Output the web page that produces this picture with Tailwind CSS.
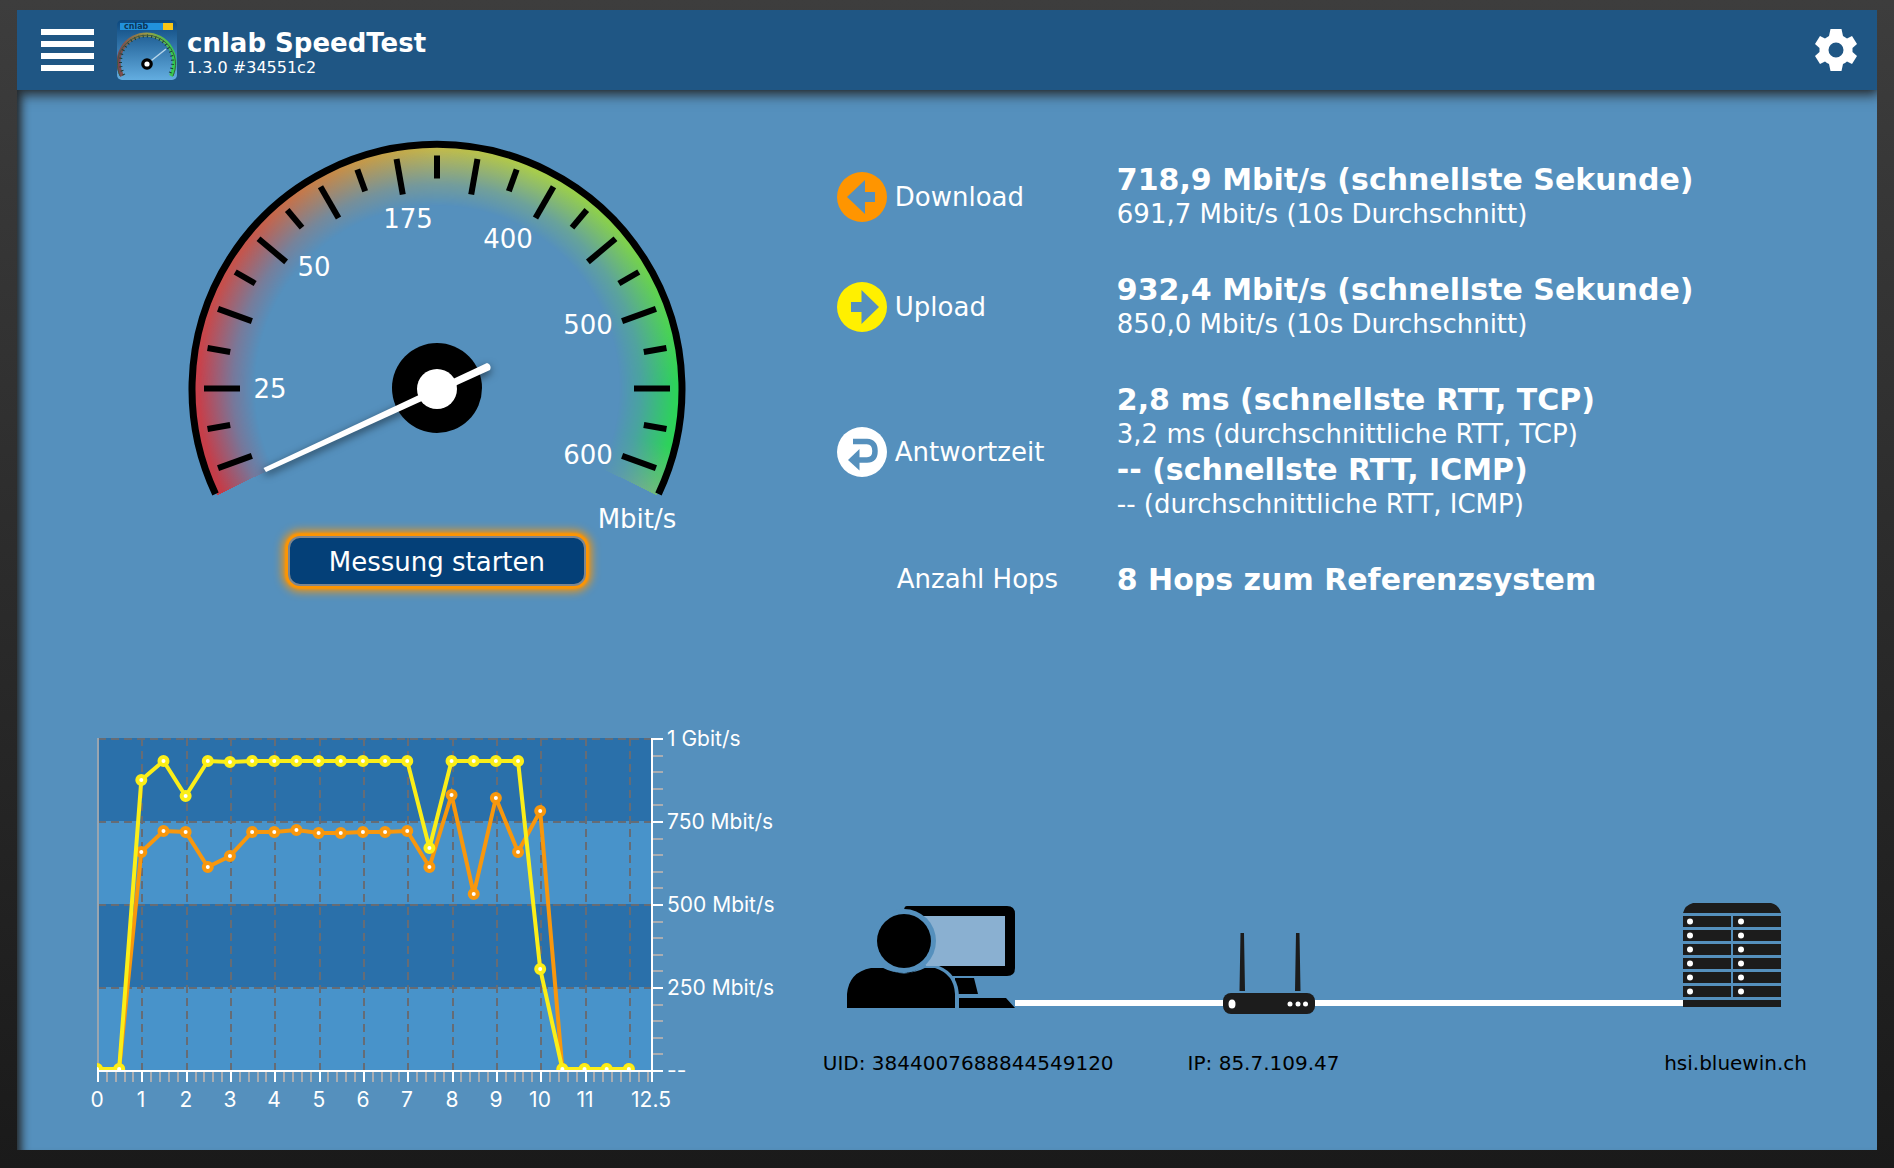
<!DOCTYPE html>
<html lang="de">
<head>
<meta charset="utf-8">
<title>cnlab SpeedTest</title>
<script src="https://cdn.jsdelivr.net/npm/@tailwindcss/browser@4"></script>
</head>
<body class="min-h-screen bg-linear-to-b from-[#3d3d3d] to-[#1a1a1a] px-[17px] pt-[10px] pb-[18px] font-['DejaVu_Sans',sans-serif] text-white">
<div class="flex min-h-[calc(100vh-28px)] flex-col overflow-hidden bg-[#5590bd]">
  <header class="relative z-10 flex h-20 shrink-0 items-center bg-[#1f5684] pr-5 pl-6 shadow-[0_2px_12px_2px_#222]">
    <button type="button" aria-label="Menü" class="flex w-[53px] flex-col gap-[6px]">
      <span class="h-[6px] w-full bg-white"></span>
      <span class="h-[6px] w-full bg-white"></span>
      <span class="h-[6px] w-full bg-white"></span>
      <span class="h-[6px] w-full bg-white"></span>
    </button>
    <svg class="ml-[23px] size-[60px]" viewBox="0 0 60 60" aria-hidden="true">
      <defs><linearGradient id="logo" x1="0" y1="0" x2="0" y2="1"><stop offset="0" stop-color="#0b477e"/><stop offset="1" stop-color="#63ade0"/></linearGradient>
      <linearGradient id="rim" x1="0" y1="0" x2="1" y2="0"><stop offset="0" stop-color="#7c4550"/><stop offset=".5" stop-color="#9c9a45"/><stop offset="1" stop-color="#2fcf50"/></linearGradient></defs>
      <rect width="60" height="60" rx="5" fill="url(#logo)"/>
      <rect x="3" y="3" width="43" height="7" fill="#2191dc"/><rect x="46" y="3" width="10" height="7" fill="#f9c616"/>
      <text x="7" y="9" font-size="8" font-weight="bold" fill="#0c3557">cnlab</text>
      <path d="M5 56A28 28 0 1 1 54 56" fill="none" stroke="url(#rim)" stroke-width="4"/>
      <path d="M7 55A26 26 0 1 1 52 55" fill="none" stroke="#173b35" stroke-width="3" stroke-dasharray="1 3.2"/>
      <path d="M3 56A29 29 0 1 1 56 56" fill="none" stroke="#3d5a45" stroke-width="1"/>
      <path d="M30 44L49 29" stroke="#b8d6ea" stroke-width="1.5"/>
      <circle cx="30" cy="44" r="5.800" fill="#000"/><circle cx="30" cy="44" r="2.600" fill="#fff"/>
    </svg>
    <div class="ml-[10px] pt-[6px]">
      <h1 class="text-[26px] leading-[30px] font-bold">cnlab SpeedTest</h1>
      <p class="text-[16px] leading-[20px]">1.3.0 #34551c2</p>
    </div>
    <button type="button" aria-label="Einstellungen" class="ml-auto">
      <svg class="size-[42px]" viewBox="0 0 42 42" fill="#fff" fill-rule="evenodd"><path d="M15.500 0H26.500L28 7Q30 8 32 9.500L37 7L42 15L37.500 19V23L42 27L37 35L32 32.500Q30 34 28 35L26.500 42H15.500L14 35Q12 34 10 32.500L5 35L0 27L4.500 23V19L0 15L5 7L10 9.500Q12 8 14 7ZM21 13.500A7.500 7.500 0 1 0 21 28.500A7.500 7.500 0 1 0 21 13.500Z"/></svg>
    </button>
  </header>

  <main class="grid grow grid-cols-[43fr_57fr] content-start gap-y-[123px] pt-[50px] pb-[30px] shadow-[inset_12px_0_10px_-8px_#222]">
    <section class="flex flex-col items-center pl-10" aria-label="Tacho">
      <div class="relative h-[356px] w-[496px]">
        <div class="absolute inset-0 overflow-hidden">
          <div class="size-[496px] rounded-full bg-[conic-gradient(from_244deg,#c43c48_0deg,#c8414b_30deg,#c4584d_65deg,#c4944a_95deg,#c0b84e_116deg,#a8cc4c_140deg,#7cd04e_170deg,#2dd25a_205deg,#2dd25a_220deg,#70b880_232deg,transparent_232deg)] mask-[radial-gradient(circle_at_center,transparent_182px,rgba(0,0,0,0.3)_204px,black_238px,black_244px,transparent_245px)]"></div>
        </div>
        <svg class="absolute inset-0 overflow-visible" width="496" height="356" viewBox="0 0 496 356" aria-hidden="true">
          <path d="M26.500 354A245 245 0 1 1 469.500 354" fill="none" stroke="#000" stroke-width="7"/>
          <g id="gauge-ticks" stroke="#000" stroke-width="6"></g>
          <circle cx="248" cy="248" r="45" fill="#000"/>
          <g style="filter:drop-shadow(0 3px 4px rgba(0,0,0,.6))">
            <path d="M74.500 328L298 223Q303 225 301 230L77 332Z" fill="#fff"/>
          </g>
          <circle cx="248" cy="249" r="20" fill="#fff"/>
          <g fill="#fff" font-size="26" text-anchor="middle">
            <text x="81" y="258">25</text><text x="125" y="136">50</text><text x="219" y="88">175</text>
            <text x="319" y="108">400</text><text x="399" y="194">500</text><text x="399" y="324">600</text><text x="448" y="388">Mbit/s</text>
          </g>
        </svg>
      </div>
      <button type="button" class="mt-10 h-[50px] w-[298px] rounded-xl border-2 border-[#80868c] bg-[#044078] pt-[2px] text-[26px] leading-none shadow-[0_0_2px_3px_#ff9500,0_0_10px_5px_#ff9500]">Messung starten</button>
    </section>

    <dl class="grid grid-cols-[280px_1fr] content-start items-center gap-y-10 pt-[22px] pl-5 text-[26px] leading-[35px] whitespace-nowrap">
      <dt class="flex items-center gap-2">
        <svg class="size-[50px]" viewBox="0 0 50 50" fill="#ff9500" fill-rule="evenodd"><path d="M25 0A25 25 0 1 0 25 50A25 25 0 1 0 25 0ZM10 25L28 8V20H38V30H28V42Z"/></svg>Download</dt>
      <dd><strong class="block text-[30px]">718,9 Mbit/s (schnellste Sekunde)</strong><span class="block">691,7 Mbit/s (10s Durchschnitt)</span></dd>
      <dt class="flex items-center gap-2">
        <svg class="size-[50px]" viewBox="0 0 50 50" fill="#fff000" fill-rule="evenodd"><path d="M25 0A25 25 0 1 0 25 50A25 25 0 1 0 25 0ZM42 25L24.500 8V20H14V30H24.500V42Z"/></svg>Upload</dt>
      <dd><strong class="block text-[30px]">932,4 Mbit/s (schnellste Sekunde)</strong><span class="block">850,0 Mbit/s (10s Durchschnitt)</span></dd>
      <dt class="flex items-center gap-2">
        <svg class="size-[50px]" viewBox="0 0 50 50"><circle cx="25" cy="25" r="25" fill="#fff"/><path d="M16 14.500H30Q38 15 38 24Q38 33 30 33H20" fill="none" stroke="#5590bd" stroke-width="5.500"/><path d="M11 33L22.500 22V43.500Z" fill="#5590bd"/></svg>Antwortzeit</dt>
      <dd><strong class="block text-[30px]">2,8 ms (schnellste RTT, TCP)</strong><span class="block">3,2 ms (durchschnittliche RTT, TCP)</span><strong class="block text-[30px]">-- (schnellste RTT, ICMP)</strong><span class="block">-- (durchschnittliche RTT, ICMP)</span></dd>
      <dt class="pl-[60px]">Anzahl Hops</dt>
      <dd><strong class="block text-[30px]">8 Hops zum Referenzsystem</strong></dd>
    </dl>

    <section class="pl-[63px]" aria-label="Verlauf">
      <svg class="overflow-visible font-[Inter,sans-serif]" width="730" height="400" viewBox="0 0 730 400">
        <path d="M18 18H572V101H18ZM18 184H572V267H18Z" fill="#2a70aa"/>
        <path d="M18 101H572V184H18ZM18 267H572V350H18Z" fill="#4893ca"/>
        <clipPath id="plot"><rect x="17" y="0" width="556" height="350"/></clipPath>
        <g id="grid" stroke="#666c75" stroke-width="2" stroke-dasharray="8 5"></g>
        <g id="minor" stroke="#a9adb2" stroke-width="2"></g>
        <path d="M18 18V350" stroke="#9aa5b0" stroke-width="2"/>
        <g id="series" clip-path="url(#plot)"></g>
        <path d="M17 351H582M572 18V362" stroke="#fff" stroke-width="2"/>
        <g id="major" stroke="#fff" stroke-width="2"></g>
        <g id="xlabels" fill="#fff" font-size="21" text-anchor="middle"></g>
        <g fill="#fff" font-size="21">
          <text x="587" y="26">1 Gbit/s</text><text x="587" y="109">750 Mbit/s</text><text x="587" y="192">500 Mbit/s</text><text x="587" y="275">250 Mbit/s</text><text x="587" y="358">--</text>
        </g>
      </svg>
    </section>

    <section class="flex flex-col justify-end pr-[70px] pb-[42px] pl-[6px] text-[20px] leading-[30px] text-black" aria-label="Verbindung">
      <div class="flex items-end pr-[26px] pl-6">
        <svg class="mb-[6px] shrink-0" width="168" height="102" viewBox="0 0 168 102" aria-hidden="true">
          <path d="M60 0H160Q168 0 168 8V62Q168 70 160 70H60L57 5Q57 0 60 0Z"/>
          <path d="M70 10H158V60H70Z" fill="#8ab0d1"/>
          <path d="M108 72H127L131 88H108ZM108 92H159L168 102H108Z"/>
          <circle cx="57" cy="35" r="32" fill="#5590bd"/>
          <path d="M70 60H92Q112 68 112 92V102H100Z" fill="#5590bd"/>
          <path d="M0 102V88Q2 66 24 62H38Q57 72 76 62H88Q107 68 108 88V102Z"/>
          <path d="M36 58Q57 77 78 58L80 61Q57 73 34 61Z" fill="#5590bd"/>
          <circle cx="57" cy="35" r="27"/>
        </svg>
        <span class="mb-2 h-[6px] grow-[208] basis-0 bg-white"></span>
        <svg class="shrink-0" width="92" height="81" viewBox="0 0 92 81" fill="#1c1c1c" aria-hidden="true">
          <path d="M17.500 0H21L22 58H16.500ZM73 0H76.500L77.500 58H72Z"/><rect y="60" width="92" height="21" rx="8"/>
          <g fill="#fff"><ellipse cx="9" cy="71" rx="3.500" ry="4.500"/><circle cx="67" cy="71" r="2.500"/><circle cx="75" cy="71" r="2.500"/><circle cx="82.500" cy="71" r="2.500"/></g>
        </svg>
        <span class="mb-2 h-[6px] grow-[368] basis-0 bg-white"></span>
        <svg class="mb-[7px] shrink-0" width="98" height="104" viewBox="0 0 98 104" fill="#1c1c1c" aria-hidden="true">
          <path d="M0 10Q2 2 10 0H88Q96 2 98 10ZM0 97H98V104H0Z"/><g id="racks"></g>
        </svg>
      </div>
      <div class="mt-[34px] flex whitespace-nowrap">
        <p>UID: 3844007688844549120</p><p class="ml-[74px]">IP: 85.7.109.47</p><p class="ml-auto">hsi.bluewin.ch</p>
      </div>
    </section>
  </main>
</div>
<script>
const put = (id, html) => document.getElementById(id).innerHTML = html;

let ticks = '';
for (let a = -20; a <= 200; a += 10) {
  const r = a * Math.PI / 180, inner = a % 20 ? 210 : 197, c = Math.cos(r), s = Math.sin(r);
  ticks += `<path d="M${248 - 233 * c} ${248.5 - 233 * s}L${248 - inner * c} ${248.5 - inner * s}"/>`;
}
put('gauge-ticks', ticks);

let grid = '', minor = '', major = '', labels = '';
for (let i = 0; i <= 12; i++) {
  const x = Math.round(18 + i * 44.32);
  if (i) grid += `<path d="M${x} 18V350"/>`;
  if (i < 12) {
    major += `<path d="M${x} 351V362"/>`;
    labels += `<text x="${x - 1}" y="387">${i}</text>`;
  }
}
put('xlabels', labels + '<text x="571" y="387">12.5</text>');
for (let i = 0; i < 63; i++) if (i % 5 || i === 60) minor += `<path d="M${Math.round(18 + i * 8.864)} 352V362"/>`;
for (let i = 0; i <= 20; i++) {
  const y = Math.round(19 + i * 16.6);
  if (i % 5) minor += `<path d="M573 ${y}H583"/>`;
  else { major += `<path d="M572 ${y}H583"/>`; if (i < 20) grid += `<path d="M18 ${y}H572"/>`; }
}
put('grid', grid); put('minor', minor); put('major', major);

const series = [
  ['#f8970d', [349,349,132,111,112,147,136,112,112,110,113,113,112,112,111,147,75,174,78,132,91,349,349,349,349]],
  ['#fbee18', [349,349,60,41,76,41,42,41,41,41,41,41,41,41,41,128,41,41,41,41,249,349,349,349,349]]
];
put('series', series.map(([color, ys]) => {
  const pts = ys.map((y, i) => [17 + i * 22.16, y]);
  return `<polyline points="${pts.join(' ')}" fill="none" stroke="${color}" stroke-width="4"/>` +
    pts.map(([x, y]) => `<circle cx="${x}" cy="${y}" r="4" fill="#fff" stroke="${color}" stroke-width="4"/>`).join('');
}).join(''));

let racks = '';
for (let i = 0; i < 6; i++) for (const x of [0, 50])
  racks += `<rect x="${x}" y="${13 + i * 14}" width="48" height="11"/><circle cx="${x ? 58 : 7}" cy="${18.5 + i * 14}" r="3" fill="#fff"/>`;
put('racks', racks);
</script>
</body>
</html>
